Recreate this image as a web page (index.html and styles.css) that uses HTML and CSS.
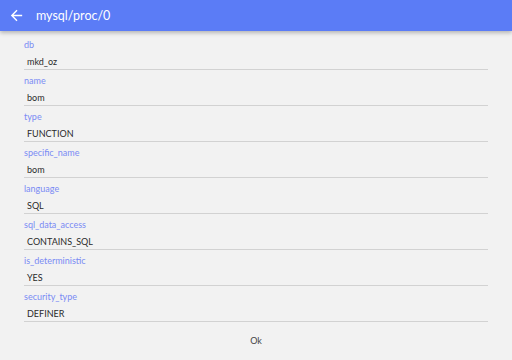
FILE: index.html
```html
<!DOCTYPE html>
<html lang="en">

<head>
    <meta charset="UTF-8">
    <meta name="viewport" content="width=device-width, initial-scale=1.0">
    <title>mysql/proc/0</title>
    <link rel="stylesheet" href="styles.css">
</head>

<body>

    <header id="toolbar">
        <button class="back" aria-label="Back">
            <svg width="17" height="17" viewBox="0 0 24 24">
                <path d="M20 11H7.83l5.59-5.59L12 4l-8 8 8 8 1.41-1.41L7.83 13H20v-2z" fill="#fff"/>
            </svg>
        </button>
        <div class="title">mysql/proc/0</div>
    </header>

    <div id="record">
        <div class="field">
            <div class="label">db</div>
            <div class="value">mkd_oz</div>
        </div>
        <div class="field">
            <div class="label">name</div>
            <div class="value">bom</div>
        </div>
        <div class="field">
            <div class="label">type</div>
            <div class="value">FUNCTION</div>
        </div>
        <div class="field">
            <div class="label">specific_name</div>
            <div class="value">bom</div>
        </div>
        <div class="field">
            <div class="label">language</div>
            <div class="value">SQL</div>
        </div>
        <div class="field">
            <div class="label">sql_data_access</div>
            <div class="value">CONTAINS_SQL</div>
        </div>
        <div class="field">
            <div class="label">is_deterministic</div>
            <div class="value">YES</div>
        </div>
        <div class="field">
            <div class="label">security_type</div>
            <div class="value">DEFINER</div>
        </div>
    </div>

    <div class="actions">
        <button class="ok">Ok</button>
    </div>

</body>

</html>
```

FILE: styles.css
```css
/* Reset */
* {
    box-sizing: border-box;
    margin: 0;
    padding: 0;
}

body {
    width: 512px;
    height: 360px;
    overflow: hidden;
    background-color: #f2f2f2;
    font-family: Lato, 'Open Sans', sans-serif;
}

/* Toolbar */
#toolbar {
    display: flex;
    align-items: center;
    height: 31px;
    background-color: #5b7cf6;
    box-shadow: 0 2px 4px rgba(0, 0, 0, 0.25);
}

#toolbar .back {
    display: flex;
    align-items: center;
    justify-content: center;
    width: 32px;
    height: 31px;
    background: none;
    border: none;
}

#toolbar .title {
    margin-left: 4px;
    color: #fff;
    font-size: 12.5px;
}

/* Record fields */
#record {
    display: flex;
    flex-direction: column;
    gap: 4px;
    padding: 7px 24px 0;
}

.field {
    display: flex;
    flex-direction: column;
    gap: 3px;
}

.label {
    height: 14px;
    line-height: 14px;
    font-size: 9px;
    color: #7a8bf4;
}

.value {
    height: 15px;
    line-height: 14px;
    padding-left: 3px;
    font-size: 9px;
    color: #2a2a2a;
    border-bottom: 1px solid #d2d2d2;
}

/* Actions */
.actions {
    display: flex;
    justify-content: center;
    padding-top: 9px;
}

.ok {
    padding: 4px 12px;
    background: none;
    border: none;
    font-family: inherit;
    font-size: 9px;
    color: #444;
}
```
